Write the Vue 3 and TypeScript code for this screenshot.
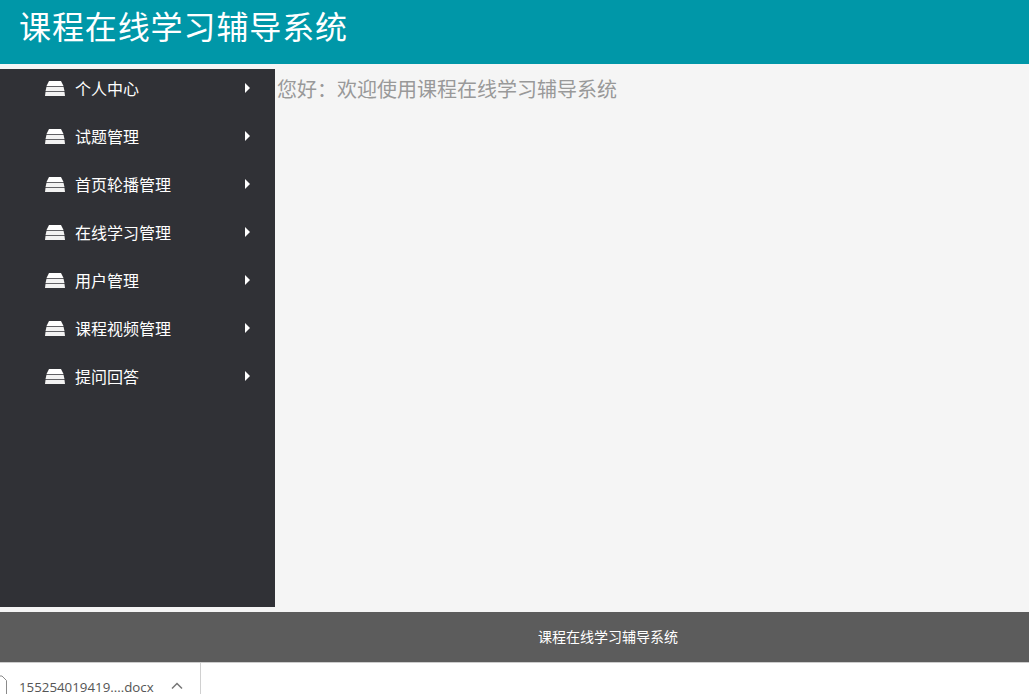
<script setup lang="ts">
const menus: string[] = ['个人中心', '试题管理', '首页轮播管理', '在线学习管理', '用户管理', '课程视频管理', '提问回答']
</script>

<template>
  <div class="page">
    <header class="header">课程在线学习辅导系统</header>
    <div class="main">
      <nav class="side">
        <div v-for="m in menus" :key="m" class="item">
          <svg class="stack" width="20" height="15" viewBox="0 0 20 15">
            <path d="M4 0H16L18.500 5H1.500Z" fill="#fff" />
            <path d="M1.500 5.800H18.500L19.500 10H.5Z" fill="#f2f2f2" />
            <path d="M.5 10.800H19.500L20 15H0Z" fill="#f2f2f2" />
          </svg>
          <span class="label">{{ m }}</span>
          <svg class="arrow" width="5" height="10" viewBox="0 0 5 10">
            <path d="M0 0L5 5L0 10Z" fill="#fff" />
          </svg>
        </div>
      </nav>
      <section class="content">您好：欢迎使用课程在线学习辅导系统</section>
    </div>
    <footer class="footer">课程在线学习辅导系统</footer>
    <div class="download">
      <svg class="file" width="8" height="20" viewBox="0 0 8 20">
        <path d="M-6 1H2L6.500 5.500V20" fill="none" stroke="#8a8a8a" stroke-width="1" />
      </svg>
      <span class="fname">155254019419....docx</span>
      <svg class="caret" width="12" height="8" viewBox="0 0 12 8">
        <path d="M1 6.500L6 1.500L11 6.500" fill="none" stroke="#777" stroke-width="1.500" />
      </svg>
      <div class="sep"></div>
    </div>
  </div>
</template>

<style scoped>
.page {
  width: 1029px;
  height: 694px;
  display: flex;
  flex-direction: column;
  overflow: hidden;
  background: #f5f5f5;
  font-family: "Noto Sans CJK SC", "Liberation Sans", sans-serif;
}
.header {
  height: 64px;
  flex: none;
  box-sizing: border-box;
  padding-left: 19px;
  background: #0097a8;
  color: #fff;
  font-size: 32px;
  line-height: 50px;
  letter-spacing: 0.9px;
}
.main {
  display: flex;
  height: 548px;
  flex: none;
  padding-top: 5px;
  box-sizing: border-box;
}
.side {
  width: 275px;
  height: 538px;
  flex: none;
  background: #303136;
}
.item {
  height: 40px;
  margin-bottom: 8px;
  display: flex;
  align-items: center;
  color: #fff;
  font-size: 16px;
  padding-left: 45px;
  box-sizing: border-box;
}
.stack {
  flex: none;
  margin-top: -2px;
}
.label {
  margin-left: 10px;
  margin-top: -2px;
  width: 170px;
  flex: none;
}
.arrow {
  flex: none;
  margin-top: -3px;
}
.content {
  flex: 1;
  padding-left: 2px;
  color: #999;
  font-size: 20px;
  line-height: 40px;
}
.footer {
  height: 50px;
  flex: none;
  background: #5c5c5c;
  color: #fff;
  font-size: 14px;
  line-height: 48px;
  padding-left: 538px;
  box-sizing: border-box;
}
.download {
  flex: 1;
  display: flex;
  align-items: flex-start;
  background: #fff;
  border-top: 1px solid #ccc;
  box-sizing: border-box;
}
.file {
  flex: none;
  margin-top: 12px;
}
.fname {
  margin-left: 11px;
  width: 152px;
  flex: none;
  font-family: "Open Sans", "Liberation Sans", sans-serif;
  font-size: 13.3px;
  line-height: 14px;
  color: #555;
  margin-top: 17px;
}
.caret {
  flex: none;
  margin-top: 19px;
}
.sep {
  margin-left: 17px;
  width: 1px;
  height: 100%;
  background: #d0d0d0;
}
</style>
